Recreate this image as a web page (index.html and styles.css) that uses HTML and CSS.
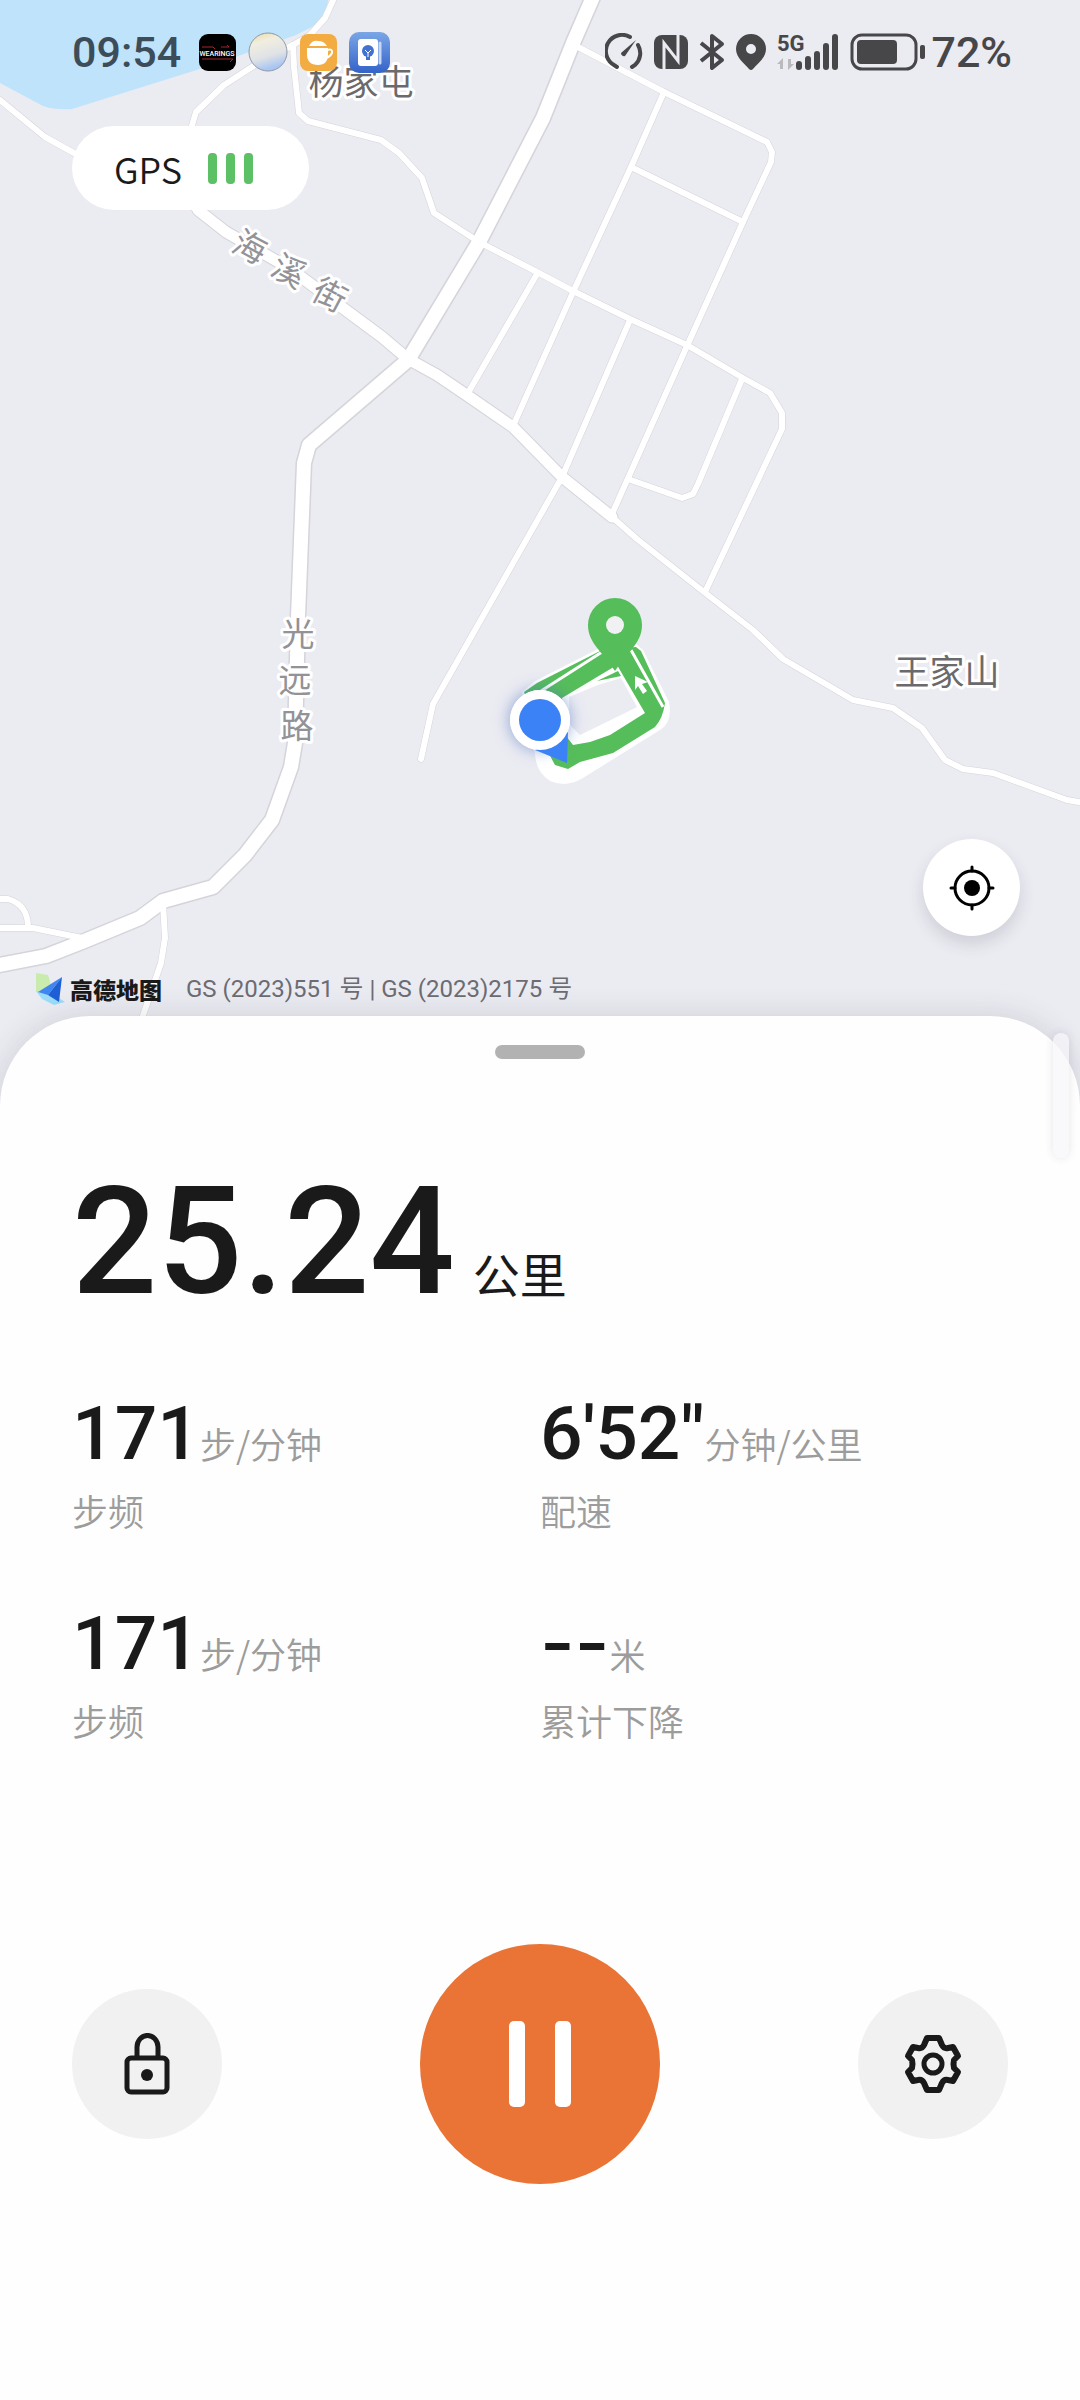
FILE: index.html
```html
<!DOCTYPE html>
<html lang="zh-CN">
<head>
    <meta charset="utf-8">
    <meta name="viewport" content="width=device-width, initial-scale=1">
    <title>户外跑步</title>
    <link rel="stylesheet" href="styles.css">
</head>
<body>
    <section class="map">
        <svg class="map-canvas" viewBox="0 0 1080 1106" preserveAspectRatio="xMidYMin slice">
            <defs>
                <g id="thin-roads">
                    <path d="M0 100L45 137L74 153L198 210"/>
                    <path d="M336 -6L325 18L310 35L293 45L255 65L224 85L196 112L190 132"/>
                    <path d="M293 45L294 67L299 113L308 121L381 140L399 153L422 178L434 213L479 242L537 272L573 291L630 319L687 345L743 378L770 393L782 413V429L705 592"/>
                    <path d="M578 47L664 92L767 142L772 152L771 162L743 222L687 346L612 514"/>
                    <path d="M664 92L631 167L574 290L513 426"/>
                    <path d="M631 167L743 222"/>
                    <path d="M537 274L468 393"/>
                    <path d="M630 320L562 477L433 704L421 759"/>
                    <path d="M742 379L698 484L693 494L682 498L628 479"/>
                    <path d="M612 517L637 539L704 592L753 630L783 659L853 700L893 708L922 728L945 760L963 769L993 773L1067 800L1084 803"/>
                    <path d="M-4 899H8Q28 905 28 927"/>
                    <path d="M-4 928H33L82 938"/>
                    <path d="M163 903L165 938L161 963L138 1030"/>
                </g>
                <path id="haixi-road" d="M198 210L226 232L289 268L382 337L408 359L437 375L468 396L513 427L562 477L612 517"/>
                <path id="guangyuan-road" d="M596 -10L573 43L543 118L479 242L408 360L309 445L304 463L298 617L295 743L291 767L272 820L245 855L213 887L163 901L140 918L82 942L46 956L-6 966"/>
            </defs>

            <path class="water" d="M0 0H328L326 15L312 27L296 35L241 55L203 68L72 109Q55 110 43 106L0 83Z"/>

            <use href="#thin-roads" class="road road-thin casing"/>
            <use href="#haixi-road" class="road road-mid casing"/>
            <use href="#guangyuan-road" class="road road-wide casing"/>
            <use href="#thin-roads" class="road road-thin"/>
            <use href="#haixi-road" class="road road-mid"/>
            <use href="#guangyuan-road" class="road road-wide"/>

            <g class="place">
                <text x="361" y="95">杨家屯</text>
                <text x="947" y="685">王家山</text>
            </g>
            <g class="street">
                <text x="250" y="259" transform="rotate(28 250 247)">海</text>
                <text x="289" y="283" transform="rotate(28 289 271)">溪</text>
                <text x="330" y="307" transform="rotate(28 330 295)">街</text>
                <text x="298" y="646">光</text>
                <text x="295" y="692">远</text>
                <text x="297" y="738">路</text>
            </g>

            <!-- run track -->
            <path fill="#fff" fill-rule="evenodd" d="M522 692L535 681L600 648L635 643L643 650L669 702Q673 722 660 730L583 778Q566 788 550 781Q536 772 535 754ZM569 697L598 685L621 678L637 707L623 714L580 735L570 725Z"/>
            <path fill="#56bd5b" fill-rule="evenodd" d="M524 692L537 683L602 650L636 647L641 651L665 703Q663 718 655 727L613 753L580 762L568 769L555 765L548 752ZM562 698L617 665L645 713L610 735L590 742L573 745L566 736Z"/>
            <path fill="#56bd5b" d="M597 681L618 671L621 676Z"/>
            <path fill="none" stroke="#fff" stroke-width="3" d="M541 691L602 652M631 650L663 707"/>
            <path fill="#56bd5b" d="M615 598A27 27 0 0 0 588 625C588 643 602 651 615 671C628 651 642 643 642 625A27 27 0 0 0 615 598Z"/>
            <circle cx="615" cy="625" r="9" fill="#f1f1f4"/>
            <path fill="#fff" d="M635 676L648 682L642 684L647 691L643 694L638 686L635 690Z"/>

            <!-- current position -->
            <circle class="position-halo" cx="540" cy="720" r="30"/>
            <path fill="#3b82f6" d="M568 732L567 763L535 750Z"/>
            <circle cx="540" cy="720" r="30" fill="#fff"/>
            <circle cx="540" cy="720" r="21" fill="#3b82f6"/>
        </svg>

        <div class="map-overlay">
            <header class="status-bar">
                <div class="status-left">
                    <span class="clock">09:54</span>
                    <svg width="37" height="37" viewBox="0 0 37 37">
                        <rect width="37" height="37" rx="9" fill="#000"/>
                        <path d="M3 13H14L16 15M22 13H30L28 11M3 25H34L31 28" fill="none" stroke="#a3262b"/>
                        <text x="18" y="22" text-anchor="middle" class="app-name">WEARINGS</text>
                    </svg>
                    <svg width="40" height="40" viewBox="0 0 40 40">
                        <defs>
                            <linearGradient id="orb" x1="0" y1="0" x2="0.3" y2="1">
                                <stop offset="0" stop-color="#ead9a0"/>
                                <stop offset="0.3" stop-color="#f1eee0"/>
                                <stop offset="0.7" stop-color="#dfe2e6"/>
                                <stop offset="1" stop-color="#a9c6f2"/>
                            </linearGradient>
                        </defs>
                        <circle cx="20" cy="20" r="19" fill="url(#orb)" stroke="#8e98a6" stroke-width="1"/>
                    </svg>
                    <svg width="37" height="37" viewBox="0 0 37 37">
                        <rect width="37" height="37" rx="8" fill="#f2ac42"/>
                        <path d="M9 12Q12 6 18 7Q24 7 27 12Z" fill="#fff"/>
                        <path d="M7 14H28V20Q28 31 18 31Q7 31 7 20Z" fill="#fff"/>
                        <path d="M27 16Q33 14 32 19Q30 23 26 24" fill="none" stroke="#fff" stroke-width="2"/>
                    </svg>
                    <svg width="41" height="41" viewBox="0 0 41 41">
                        <defs>
                            <linearGradient id="notes" x1="0" y1="0" x2="0" y2="1">
                                <stop offset="0" stop-color="#7aa6e6"/>
                                <stop offset="1" stop-color="#3463c9"/>
                            </linearGradient>
                        </defs>
                        <rect width="41" height="41" rx="10" fill="url(#notes)"/>
                        <rect x="9" y="7" width="20" height="27" rx="3" fill="#fff"/>
                        <path d="M31 11V31" stroke="#c6d8f6" stroke-width="3" stroke-linecap="round"/>
                        <circle cx="19" cy="19" r="6" fill="#4172cf"/>
                        <path d="M17 23H21V28H17Z" fill="#4172cf"/>
                        <path d="M16 18L19 21L22 18M19 21V25" fill="none" stroke="#fff"/>
                    </svg>
                </div>
                <div class="status-right">
                    <svg width="38" height="38" viewBox="0 0 38 38" fill="none" stroke="#47474a" stroke-width="4" stroke-linecap="round">
                        <path d="M12 34L9 32A16 16 0 0 1 25 4M33 12A16 16 0 0 1 30 32L27 34"/>
                        <path d="M31 7L16 20A3 3 0 0 0 20 23Z" fill="#47474a" stroke="none"/>
                    </svg>
                    <svg width="34" height="36" viewBox="0 0 34 36">
                        <rect y="1" width="34" height="34" rx="8" fill="#47474a"/>
                        <path d="M10 35V9L24 27V1" fill="none" stroke="#ebebf1" stroke-width="3"/>
                    </svg>
                    <svg width="26" height="38" viewBox="0 0 26 38" fill="none" stroke="#47474a" stroke-width="4" stroke-linejoin="round">
                        <path d="M2 10L23 27L13 35V3L23 11L2 28"/>
                    </svg>
                    <svg width="30" height="36" viewBox="0 0 30 36">
                        <path fill="#47474a" fill-rule="evenodd" d="M15 0A15 15 0 0 0 0 15C0 24 9 30 13 35Q15 37 17 35C21 30 30 24 30 15A15 15 0 0 0 15 0ZM15 10A5 5 0 1 1 15 20A5 5 0 1 1 15 10Z"/>
                    </svg>
                    <svg width="62" height="40" viewBox="0 0 62 40">
                        <text x="0" y="19" class="network">5G</text>
                        <path fill="#b9b9be" d="M6 26V37H3V32H0ZM11 38V27H14V32H17Z"/>
                        <path stroke="#47474a" stroke-width="6" stroke-linecap="round" d="M22 32V35M31 27V35M40 22V35M49 14V35M58 5V35"/>
                    </svg>
                    <svg class="battery" width="76" height="38" viewBox="0 0 76 38">
                        <rect x="2" y="2" width="64" height="34" rx="10" fill="none" stroke="#47474a" stroke-width="3"/>
                        <rect x="7" y="7" width="40" height="24" rx="4" fill="#47474a"/>
                        <rect x="70" y="12" width="5" height="14" rx="2" fill="#47474a"/>
                    </svg>
                    <span class="charge">72%</span>
                </div>
            </header>

            <div class="gps">
                <span>GPS</span>
                <span class="gps-bars"><i></i><i></i><i></i></span>
            </div>

            <div class="map-bottom">
                <button class="locate" type="button" aria-label="定位">
                    <svg width="46" height="46" viewBox="0 0 46 46" fill="none" stroke="#000" stroke-width="3" stroke-linecap="round">
                        <circle cx="23" cy="23" r="17"/>
                        <circle cx="23" cy="23" r="8" fill="#000" stroke="none"/>
                        <path d="M23 2V6M23 40V44M2 23H6M40 23H44"/>
                    </svg>
                </button>
                <div class="attribution">
                    <svg width="30" height="32" viewBox="0 0 30 32">
                        <path fill="#c9ecae" d="M0 0L12 2L15 12L4 22L0 18Z"/>
                        <path fill="#9bdcf8" d="M0 18L18 22L29 29L18 32L6 26Z"/>
                        <path fill="#3f86f0" d="M26 4L2 19L12 22Z"/>
                        <path fill="#1f5fd6" d="M26 4L12 22L23 29Z"/>
                    </svg>
                    <strong>高德地图</strong>
                    <span>GS (2023)551 号 | GS (2023)2175 号</span>
                </div>
            </div>
        </div>
    </section>

    <main class="sheet">
        <div class="handle"></div>
        <div class="edge-bar"></div>

        <p class="distance"><span class="number">25.24</span><span class="unit">公里</span></p>

        <dl class="stats">
            <div class="stat">
                <dt>步频</dt>
                <dd><span class="number">171</span>步/分钟</dd>
            </div>
            <div class="stat">
                <dt>配速</dt>
                <dd><span class="number">6'52"</span>分钟/公里</dd>
            </div>
            <div class="stat">
                <dt>步频</dt>
                <dd><span class="number">171</span>步/分钟</dd>
            </div>
            <div class="stat">
                <dt>累计下降</dt>
                <dd><span class="number empty">--</span>米</dd>
            </div>
        </dl>

        <div class="controls">
            <button class="round" type="button" aria-label="锁定">
                <svg width="46" height="62" viewBox="0 0 46 62" fill="none" stroke="#1a1a1a" stroke-width="5">
                    <rect x="3" y="25" width="40" height="34" rx="4"/>
                    <path d="M13 25V14A10 11 0 0 1 34 14V25"/>
                    <circle cx="23" cy="42" r="6" fill="#1a1a1a" stroke="none"/>
                </svg>
            </button>
            <button class="pause" type="button" aria-label="暂停">
                <svg width="62" height="86" viewBox="0 0 62 86" fill="#fff">
                    <rect width="16" height="86" rx="5"/>
                    <rect x="46" width="16" height="86" rx="5"/>
                </svg>
            </button>
            <button class="round" type="button" aria-label="设置">
                <svg width="60" height="62" viewBox="-30 -31 60 62" fill="none" stroke="#1a1a1a" stroke-width="6" stroke-linejoin="round">
                    <path d="M-6 -26H6L9 -19Q11 -15 15 -16L20 -17L25 -8L21 -4Q20 0 21 4L25 8L20 17L15 16Q11 15 9 19L6 26H-6L-9 19Q-11 15 -15 16L-20 17L-25 8L-21 4Q-20 0 -21 -4L-25 -8L-20 -17L-15 -16Q-11 -15 -9 -19Z"/>
                    <circle r="9" stroke-width="5"/>
                </svg>
            </button>
        </div>
    </main>
</body>
</html>
```

FILE: styles.css
```css
* {
    box-sizing: border-box;
}
body {
    display: flex;
    flex-direction: column;
    min-height: 100vh;
    margin: 0;
    background-color: #fefefe;
    color: #1a1a1a;
    font-family: "Noto Sans CJK SC", sans-serif;
}
button {
    display: flex;
    justify-content: center;
    align-items: center;
    padding: 0;
    border: 0;
    border-radius: 50%;
    cursor: pointer;
}

/* map */
.map {
    position: relative;
    display: flex;
    flex: 1;
    background-color: #ebebf2;
}
.map-canvas {
    position: absolute;
    inset: 0;
    width: 100%;
    height: 100%;
}
.water {
    fill: #bfe3fb;
}
.road {
    fill: none;
    stroke: #fff;
    stroke-linecap: round;
    stroke-linejoin: round;
}
.road-thin {
    stroke-width: 6px;
}
.road-mid {
    stroke-width: 11px;
}
.road-wide {
    stroke-width: 14px;
}
.casing {
    stroke: #d4d4da;
}
.road-thin.casing {
    stroke-width: 7px;
}
.road-mid.casing {
    stroke-width: 13px;
}
.road-wide.casing {
    stroke-width: 17px;
}
.place, .street {
    text-anchor: middle;
    stroke: #fff;
    stroke-width: 6px;
    stroke-linejoin: round;
    paint-order: stroke;
}
.place {
    fill: #6a6a6e;
    font-size: 35px;
}
.street {
    fill: #929297;
    font-size: 33px;
}
.position-halo {
    fill: #fff;
    filter: drop-shadow(0 0 8px rgba(70, 110, 190, 0.6));
}
.map-overlay {
    position: relative;
    display: flex;
    flex-direction: column;
    flex: 1;
}

/* status bar */
.status-bar {
    display: flex;
    justify-content: space-between;
    align-items: center;
    height: 104px;
    padding: 0 68px 0 72px;
    font-family: Roboto, sans-serif;
    font-size: 43px;
    font-weight: 500;
    line-height: 48px;
    color: #47474a;
}
.status-left, .status-right {
    display: flex;
    align-items: center;
    gap: 12px;
}
.clock {
    margin-right: 6px;
    color: #3d4c59;
}
.app-name {
    fill: #fff;
    font-size: 7px;
}
.network {
    fill: #47474a;
    font-size: 22px;
    font-weight: 700;
}
.status-right {
    gap: 11px;
}
.battery {
    margin-right: -6px;
}

.gps {
    display: flex;
    align-items: center;
    align-self: flex-start;
    gap: 26px;
    height: 84px;
    margin: 22px 72px 0;
    padding: 0 56px 0 42px;
    border-radius: 42px;
    background-color: #fff;
    font-size: 36px;
    font-weight: 350;
    line-height: 40px;
}
.gps-bars {
    display: flex;
    gap: 9px;
}
.gps-bars i {
    width: 9px;
    height: 31px;
    border-radius: 4px;
    background-color: #5cc064;
}

.map-bottom {
    margin-top: auto;
    padding: 0 60px 100px 36px;
}
.locate {
    width: 97px;
    height: 97px;
    margin-left: auto;
    background-color: #fff;
    box-shadow: 0 8px 16px rgba(60, 60, 80, 0.16);
}
.attribution {
    display: flex;
    align-items: center;
    margin-top: 36px;
    line-height: 34px;
}
.attribution strong {
    margin: 0 24px 0 4px;
    color: #1a1a1a;
    font-size: 23px;
    font-weight: 900;
}
.attribution span {
    color: #6c6c72;
    font-family: Roboto, "Noto Sans CJK SC", sans-serif;
    font-size: 24px;
}

/* bottom sheet */
.sheet {
    position: relative;
    margin-top: -90px;
    padding: 29px 72px 216px;
    border-radius: 90px 90px 0 0;
    background-color: #fefefe;
    box-shadow: 0 0 30px rgba(60, 60, 80, 0.16);
}
.handle {
    width: 90px;
    height: 14px;
    margin: 0 auto;
    border-radius: 7px;
    background-color: #b2b2b2;
}
.edge-bar {
    position: absolute;
    top: 17px;
    right: 11px;
    width: 16px;
    height: 125px;
    border-radius: 8px;
    background-color: rgba(247, 247, 251, 0.7);
    box-shadow: 0 0 8px rgba(60, 60, 80, 0.12);
}
.number {
    color: #1a1a1a;
    font-family: Roboto, sans-serif;
    font-weight: 500;
}
.distance {
    display: flex;
    align-items: baseline;
    gap: 18px;
    margin: 108px 0 76px;
    line-height: 150px;
}
.distance .number {
    font-size: 150px;
}
.distance .unit {
    font-size: 47px;
    line-height: 48px;
}
.stats {
    display: grid;
    grid-template-columns: 1fr 1fr;
    row-gap: 73px;
    margin: 0;
    color: #9c9c9c;
    font-size: 36px;
    font-weight: 350;
    line-height: 40px;
}
.stat {
    display: flex;
    flex-direction: column-reverse;
    gap: 17px;
}
.stat dd {
    display: flex;
    align-items: baseline;
    height: 80px;
    margin: 0;
}
.stat .number {
    font-size: 75px;
    line-height: 80px;
}
.stat .empty {
    font-family: Inter, sans-serif;
}

.controls {
    display: flex;
    justify-content: space-between;
    align-items: center;
    margin-top: 204px;
}
.round {
    width: 150px;
    height: 150px;
    background-color: #f1f1f1;
}
.pause {
    width: 240px;
    height: 240px;
    background-color: #e97435;
}
```
